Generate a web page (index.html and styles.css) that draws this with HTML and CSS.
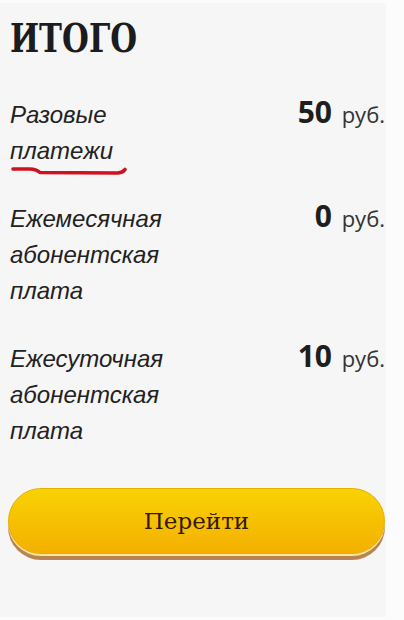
FILE: index.html
```html
<!DOCTYPE html>
<html lang="ru">
<head>
    <meta charset="UTF-8">
    <meta name="viewport" content="width=device-width, initial-scale=1.0">
    <title>Итого</title>
    <link rel="stylesheet" href="styles.css">
</head>
<body>
    <div class="container">
        <h1 class="title">ИТОГО</h1>

        <div class="row">
            <div class="label">
                Разовые<br>платежи
                <svg class="mark" width="130" height="14" viewBox="0 0 130 14">
                    <path d="M3 3 L20 3 Q26 3 30 6.5 L108 7 Q113 6.5 115 3.5" fill="none" stroke="#d0121e" stroke-width="3.6" stroke-linecap="round" stroke-linejoin="round"/>
                </svg>
            </div>
            <div class="price"><b>50</b> руб.</div>
        </div>

        <div class="row">
            <div class="label">Ежемесячная<br>абонентская<br>плата</div>
            <div class="price"><b>0</b> руб.</div>
        </div>

        <div class="row">
            <div class="label">Ежесуточная<br>абонентская<br>плата</div>
            <div class="price"><b>10</b> руб.</div>
        </div>

        <button class="go" type="button">Перейти</button>
    </div>
</body>
</html>
```

FILE: styles.css
```css
body {
    margin: 0;
    background-color: #fcfcfc;
}
.container {
    width: 386px;
    height: 614px;
    margin-top: 3px;
    padding: 0 1px 0 10px;
    box-sizing: border-box;
    background-color: #f6f6f6;
}
.title {
    margin: 0 0 34px 0;
    padding-top: 11px;
    font-family: "DejaVu Serif", serif;
    font-weight: bold;
    font-size: 39px;
    line-height: 48px;
    color: #1c1c20;
    transform: scaleX(0.79);
    transform-origin: left;
}
.row {
    display: flex;
    justify-content: space-between;
    align-items: baseline;
    margin-bottom: 31px;
}
.label {
    position: relative;
    font-family: "Liberation Sans", Arial, sans-serif;
    font-style: italic;
    font-size: 24px;
    line-height: 36px;
    color: #222;
}
.mark {
    position: absolute;
    left: 0;
    top: 69px;
}
.price {
    font-family: "Open Sans", sans-serif;
    font-size: 22px;
    line-height: 36px;
    color: #333;
}
.price b {
    font-size: 30px;
    line-height: 1;
    font-weight: bold;
    color: #1e1e1e;
    margin-right: 4px;
}
.go {
    display: block;
    width: 377px;
    height: 66px;
    margin: 39px 0 0 -2px;
    border: 1px solid #e6b000;
    border-radius: 33px;
    background: linear-gradient(#f9d204, #f6bd02 60%, #f4b000);
    box-shadow: 0 2px 0 #ffe49a, 0 6px 0 #b88452;
    font-family: "DejaVu Serif", serif;
    font-size: 23px;
    color: #351800;
    cursor: pointer;
}
```
